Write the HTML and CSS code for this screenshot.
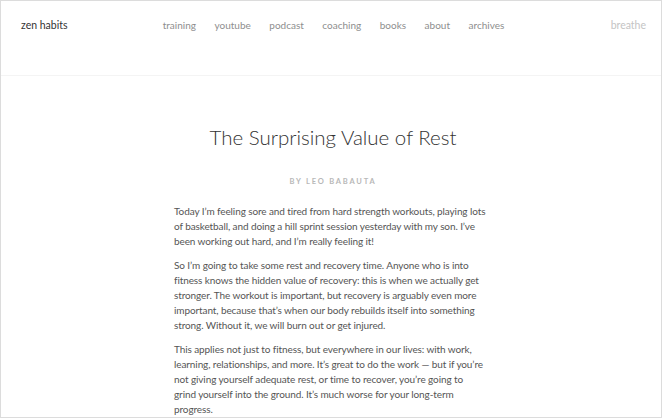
FILE: index.html
```html
<!DOCTYPE html>
<html lang="en">
<head>
  <meta charset="UTF-8" />
  <title>The Surprising Value of Rest : zen habits</title>
  <link rel="stylesheet" href="styles.css">
</head>
<body>
  <div class="page">
    <header class="site-header">
      <a class="logo" href="#">zen habits</a>
      <nav class="main-nav">
        <a href="#">training</a>
        <a href="#">youtube</a>
        <a href="#">podcast</a>
        <a href="#">coaching</a>
        <a href="#">books</a>
        <a href="#">about</a>
        <a href="#">archives</a>
      </nav>
      <a class="breathe" href="#">breathe</a>
    </header>

    <main class="post">
      <h1 class="post-title">The Surprising Value of Rest</h1>
      <p class="byline">By Leo Babauta</p>

      <div class="entry">
        <p>Today I&rsquo;m feeling sore and tired from hard strength workouts, playing lots of basketball, and doing a hill sprint session yesterday with my son. I&rsquo;ve been working out hard, and I&rsquo;m really feeling it!</p>
        <p>So I&rsquo;m going to take some rest and recovery time. Anyone who is into fitness knows the hidden value of recovery: this is when we actually get stronger. The workout is important, but recovery is arguably even more important, because that&rsquo;s when our body rebuilds itself into something strong. Without it, we will burn out or get injured.</p>
        <p>This applies not just to fitness, but everywhere in our lives: with work, learning, relationships, and more. It&rsquo;s great to do the work &mdash; but if you&rsquo;re not giving yourself adequate rest, or time to recover, you&rsquo;re going to grind&nbsp;yourself into the ground. It&rsquo;s much worse for your long-term progress.</p>
      </div>
    </main>
  </div>
</body>
</html>
```

FILE: styles.css
```css
html, body { margin: 0; padding: 0; background: #fff; }
body { font-family: Lato, "Noto Sans", sans-serif; color: #555; }
a { text-decoration: none; }

.page { height: 418px; box-sizing: border-box; border: 1px solid #dcdcdc; overflow: hidden; }

/* header */
.site-header { display: grid; grid-template-columns: 1fr auto 1fr; align-items: start; height: 75px; padding: 17px 15px 0 20px; box-sizing: border-box; border-bottom: 1px solid #f4f4f4; font-size: 10.5px; line-height: 14px; }
.logo { color: #333; justify-self: start; }
.main-nav { display: flex; gap: 18.5px; font-size: 10px; }
.main-nav a { color: #8e8e8e; }
.breathe { color: #c4c4c4; justify-self: end; }

/* post */
.post { width: 318px; margin: 0 auto; padding: 49px 0 0 4px; }
.post-title { margin: 0; font-size: 20.5px; font-weight: 300; line-height: 24px; color: #333; text-align: center; }
.byline { margin: 27px 0 0; font-size: 7.5px; font-weight: 700; letter-spacing: 1.8px; text-transform: uppercase; color: #b8b8b8; text-align: center; line-height: 12px; }
.entry { margin-top: 16px; font-size: 10px; line-height: 15px; letter-spacing: -0.1px; }
.entry p { margin: 0 0 9px; }
```
